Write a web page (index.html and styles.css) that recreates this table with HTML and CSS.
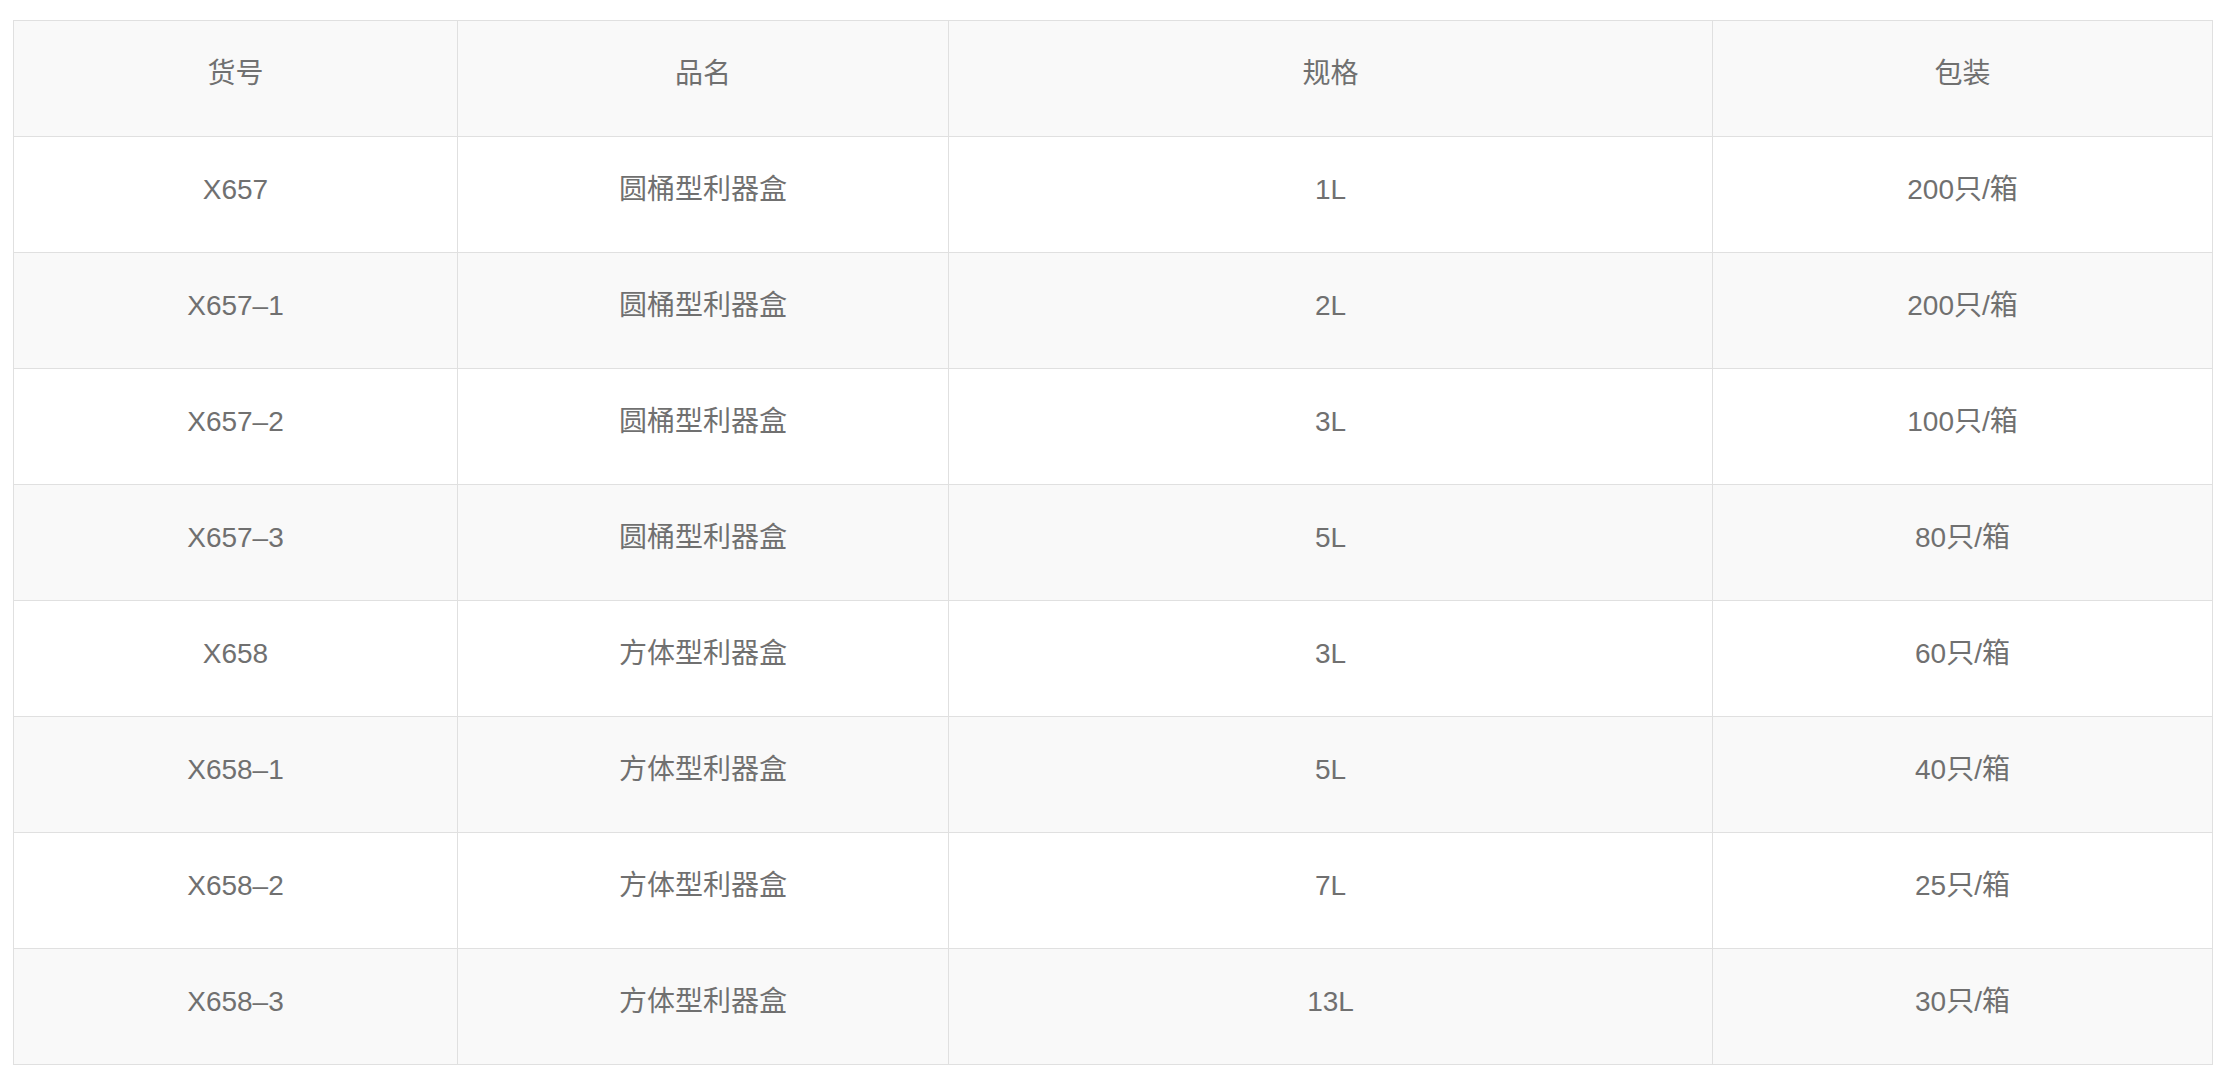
FILE: index.html
```html
<!DOCTYPE html>
<html lang="zh-CN">
<head>
<meta charset="utf-8">
<title>产品规格</title>
<link rel="stylesheet" href="styles.css">
</head>
<body>
<table class="spec">
  <colgroup>
    <col class="c1"><col class="c2"><col class="c3"><col class="c4">
  </colgroup>
  <thead>
    <tr><th>货号</th><th>品名</th><th>规格</th><th>包装</th></tr>
  </thead>
  <tbody>
    <tr><td>X657</td><td>圆桶型利器盒</td><td>1L</td><td>200只/箱</td></tr>
    <tr><td>X657–1</td><td>圆桶型利器盒</td><td>2L</td><td>200只/箱</td></tr>
    <tr><td>X657–2</td><td>圆桶型利器盒</td><td>3L</td><td>100只/箱</td></tr>
    <tr><td>X657–3</td><td>圆桶型利器盒</td><td>5L</td><td>80只/箱</td></tr>
    <tr><td>X658</td><td>方体型利器盒</td><td>3L</td><td>60只/箱</td></tr>
    <tr><td>X658–1</td><td>方体型利器盒</td><td>5L</td><td>40只/箱</td></tr>
    <tr><td>X658–2</td><td>方体型利器盒</td><td>7L</td><td>25只/箱</td></tr>
    <tr><td>X658–3</td><td>方体型利器盒</td><td>13L</td><td>30只/箱</td></tr>
  </tbody>
</table>
</body>
</html>
```
FILE: styles.css
```css
html, body {
  margin: 0;
  background: #ffffff;
}
body {
  padding: 20px 0 0 13px;
  font-family: "Liberation Sans", "Noto Sans CJK SC", sans-serif;
}
.spec {
  border-collapse: collapse;
  width: 2199px;
  table-layout: fixed;
  color: #707070;
  font-size: 28px;
}
.spec .c1 { width: 444px; }
.spec .c2 { width: 491px; }
.spec .c3 { width: 764px; }
.spec .c4 { width: 500px; }
.spec th,
.spec td {
  border: 1px solid #e0e0e0;
  height: 116px;
  padding: 0 0 10px 0;
  box-sizing: border-box;
  text-align: center;
  vertical-align: middle;
  font-weight: normal;
  line-height: 1;
}
.spec thead tr,
.spec tbody tr:nth-child(even) {
  background: #f9f9f9;
}
.spec tbody tr:nth-child(odd) {
  background: #ffffff;
}
```
